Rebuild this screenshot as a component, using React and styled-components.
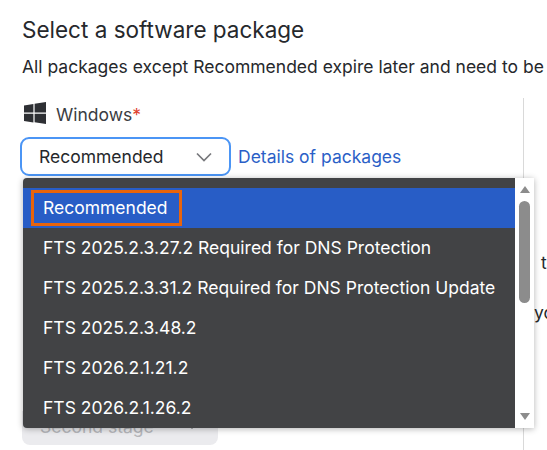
import React from 'react';
import styled, { createGlobalStyle } from 'styled-components';

const packages = [
    'Recommended',
    'FTS 2025.2.3.27.2 Required for DNS Protection',
    'FTS 2025.2.3.31.2 Required for DNS Protection Update',
    'FTS 2025.2.3.48.2',
    'FTS 2026.2.1.21.2',
    'FTS 2026.2.1.26.2',
];

const GlobalStyle = createGlobalStyle`
    html, body {
        margin: 0;
        height: 450px;
        overflow: hidden;
        background: #fff;
    }
`;

const Page = styled.div`
    width: 547px;
    height: 450px;
    overflow: hidden;
    box-sizing: border-box;
    padding: 15px 0 0 22px;
    font-family: Inter, 'Liberation Sans', sans-serif;
    color: #26282c;
    white-space: nowrap;
`;

const Title = styled.h2`
    margin: 0;
    font-size: 22.5px;
    line-height: 29px;
    font-weight: 400;
`;

const Desc = styled.p`
    margin: 11px 0 0;
    width: 525px;
    overflow: hidden;
    font-size: 17.5px;
    line-height: 24px;
`;

const Columns = styled.div`
    display: flex;
    margin-top: 19px;
    height: 352px;
`;

const LeftCol = styled.div`
    position: relative;
    width: 501px;
    flex: none;
    border-right: 1px solid #d9d9d9;
`;

const RightCol = styled.div`
    padding-top: 153px;
    font-size: 17.5px;
    line-height: 24px;
`;

const RightLine = styled.div`
    margin-bottom: 26px;
    padding-left: ${(p) => p.$indent}px;
`;

const OsRow = styled.div`
    display: flex;
    align-items: center;
    gap: 9px;
    height: 26px;
    margin-top: 2px;
    margin-left: 1px;
`;

const OsName = styled.span`
    margin-top: 4px;
    font-size: 17.5px;
    line-height: 24px;
    color: #3a3d42;
`;

const Star = styled.span`
    color: #e0422f;
`;

const SelectRow = styled.div`
    display: flex;
    align-items: center;
    gap: 7px;
    margin-top: 11px;
    margin-left: -2px;
`;

const SelectBox = styled.div`
    width: 211px;
    height: 39px;
    box-sizing: border-box;
    display: flex;
    align-items: center;
    justify-content: space-between;
    padding: 0 16px 0 17px;
    border: 2px solid #4b95f5;
    border-radius: 9px;
    background: #fff;
    font-size: 17.5px;
    color: #26282c;
`;

const DetailsLink = styled.a`
    font-size: 17.5px;
    color: #2b5fc7;
`;

const SecondStage = styled.div`
    position: absolute;
    top: 313px;
    left: 0;
    width: 196px;
    height: 34px;
    box-sizing: border-box;
    display: flex;
    align-items: center;
    justify-content: space-between;
    padding: 0 22px 3px 18px;
    background: #ebebee;
    border-radius: 0 0 8px 8px;
    font-size: 17.5px;
    color: #b5b6ba;
`;

const SmallCaret = styled.span`
    width: 0;
    height: 0;
    border-left: 4px solid transparent;
    border-right: 4px solid transparent;
    border-top: 4px solid #77787c;
`;

const Dropdown = styled.div`
    position: absolute;
    top: 80px;
    left: 1px;
    width: 511px;
    height: 250px;
    display: flex;
    background: #424345;
    border-radius: 4px 0 0 4px;
    box-shadow: 0 1px 6px rgba(0, 0, 0, 0.3);
`;

const Options = styled.ul`
    flex: 1;
    margin: 0;
    padding: 10px 0 0;
    list-style: none;
`;

const Option = styled.li`
    height: 40px;
    box-sizing: border-box;
    display: flex;
    align-items: center;
    padding: 0 0 2px 20px;
    font-size: 17.5px;
    color: #fff;
    background: ${(p) => (p.$active ? '#285dc6' : 'transparent')};
`;

const ActiveLabel = styled.span`
    position: relative;
    z-index: 0;

    &::before {
        content: '';
        position: absolute;
        z-index: -1;
        inset: -7px -14px -8px -12px;
        border: 3px solid #e8640c;
    }
`;

const Scrollbar = styled.div`
    width: 19px;
    flex: none;
    display: flex;
    flex-direction: column;
    align-items: center;
    background: #fff;
`;

const ArrowUp = styled.span`
    margin-top: 8px;
    width: 0;
    height: 0;
    border-left: 5px solid transparent;
    border-right: 5px solid transparent;
    border-bottom: 7px solid #8c8c8c;
`;

const ArrowDown = styled.span`
    margin-top: auto;
    margin-bottom: 8px;
    width: 0;
    height: 0;
    border-left: 5px solid transparent;
    border-right: 5px solid transparent;
    border-top: 7px solid #8c8c8c;
`;

const Thumb = styled.div`
    width: 11px;
    height: 102px;
    margin-top: 8px;
    border-radius: 6px;
    background: #8c8c8c;
`;

function WindowsIcon() {
    return (
        <svg width="24" height="24" viewBox="0 0 24 24" fill="#2e3034">
            <path d="M1 4.400 10.400 3v8.600H1zM11.600 2.800 23 1v10.600H11.600zM1 12.800h9.400v8.600L1 20zM11.600 12.800H23V23l-11.400-1.700z" />
        </svg>
    );
}

function Chevron() {
    return (
        <svg width="18" height="18" viewBox="0 0 18 18" fill="none" stroke="#77787c" strokeWidth="1.700">
            <path d="M2 5.500 9 12.500 16 5.500" />
        </svg>
    );
}

export default function App() {
    return (
        <Page>
            <GlobalStyle />
            <Title>Select a software package</Title>
            <Desc>All packages except Recommended expire later and need to be updated</Desc>
            <Columns>
                <LeftCol>
                    <OsRow>
                        <WindowsIcon />
                        <OsName>
                            Windows<Star>*</Star>
                        </OsName>
                    </OsRow>
                    <SelectRow>
                        <SelectBox>
                            Recommended
                            <Chevron />
                        </SelectBox>
                        <DetailsLink>Details of packages</DetailsLink>
                    </SelectRow>
                    <SecondStage>
                        Second stage
                        <SmallCaret />
                    </SecondStage>
                    <Dropdown>
                        <Options>
                            {packages.map((name, i) => (
                                <Option key={name} $active={i === 0}>
                                    {i === 0 ? <ActiveLabel>{name}</ActiveLabel> : name}
                                </Option>
                            ))}
                        </Options>
                        <Scrollbar>
                            <ArrowUp />
                            <Thumb />
                            <ArrowDown />
                        </Scrollbar>
                    </Dropdown>
                </LeftCol>
                <RightCol>
                    <RightLine $indent={17}>t</RightLine>
                    <RightLine $indent={10}>yo</RightLine>
                </RightCol>
            </Columns>
        </Page>
    );
}
